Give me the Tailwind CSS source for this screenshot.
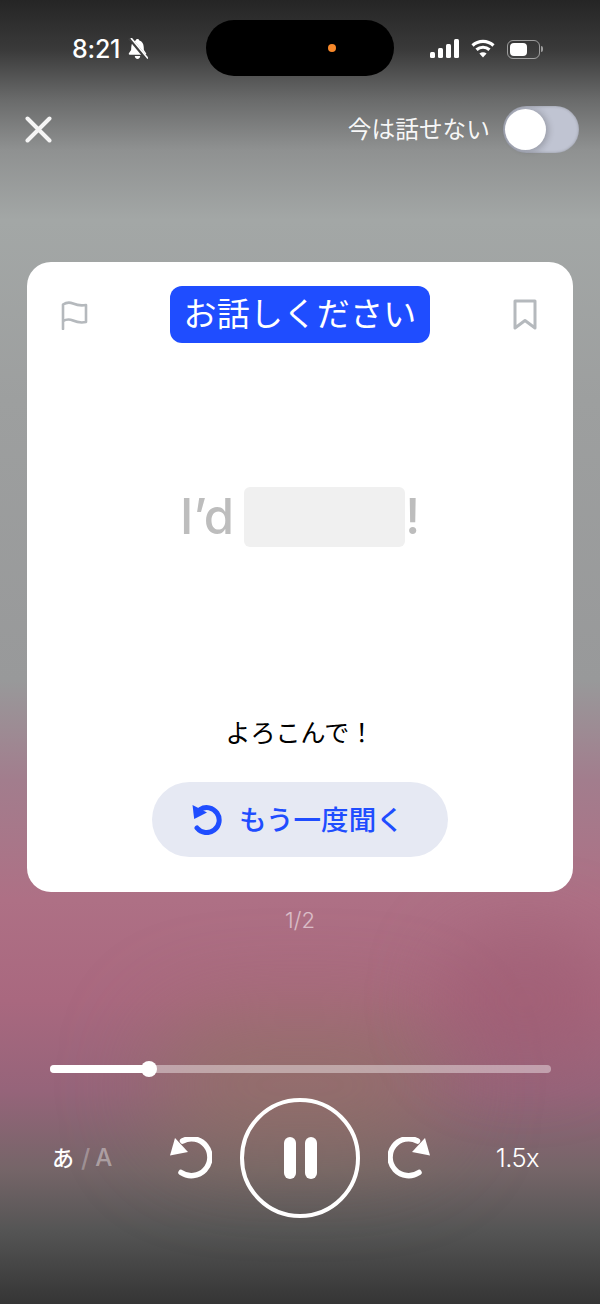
<!DOCTYPE html>
<html lang="ja">
<head>
<meta charset="utf-8">
<script src="https://cdn.jsdelivr.net/npm/@tailwindcss/browser@4"></script>
</head>
<body>
<div class="relative w-[600px] h-[1304px] overflow-hidden flex flex-col font-['Inter','Noto_Sans_CJK_JP',sans-serif] bg-[linear-gradient(180deg,#252525_0px,#3a3a3a_50px,#6a6b6b_100px,#8f9191_150px,#a3a7a6_220px,#9d9f9f_400px,#98999a_680px,#a27d8d_780px,#ae7085_900px,#a9687f_1000px,#96647a_1090px,#756568_1170px,#555555_1230px,#353535_1304px)]">
  <div class="absolute left-[150px] top-[1010px] w-[300px] h-[150px] rounded-full bg-[#8f7a5c]/45 blur-[45px]"></div>
  <div class="absolute left-[440px] top-[930px] w-[170px] h-[140px] rounded-full bg-[#9c5a70]/50 blur-[35px]"></div>

  <!-- status bar -->
  <div class="relative h-[95px] shrink-0 flex items-start">
    <div class="absolute left-[206px] top-[20px] w-[188px] h-[56px] rounded-full bg-black">
      <div class="absolute left-[122px] top-[24px] w-[8px] h-[8px] rounded-full bg-[#f7882a]"></div>
    </div>
    <div class="mt-[35px] ml-[72px] flex items-center gap-[7px] text-white">
      <span class="text-[25px] leading-[28px] font-medium tracking-[-0.2px]">8:21</span>
      <svg width="21" height="22" viewBox="0 0 21 22" fill="#fff"><path d="M10.500 1c1 0 1.700.6 1.800 1.500 2.700.8 4.200 3 4.400 6.300l.2 3.100 2.200 3.400c.4.700 0 1.400-.8 1.400H2.700c-.8 0-1.200-.7-.8-1.400l2.200-3.400.2-3.100C4.500 5.500 6 3.300 8.700 2.500 8.800 1.600 9.500 1 10.500 1z"/><path d="M7.800 18h5.400c0 1.700-1.200 2.900-2.700 2.900S7.800 19.700 7.800 18z"/><path d="M2.500 0l17 20.500" stroke="#3f3f3f" stroke-width="3.600"/><path d="M4 0l17 20.500" stroke="#fff" stroke-width="1.700"/></svg>
    </div>
    <div class="absolute left-[430px] top-[39px] flex items-end gap-[3px]">
      <span class="w-[5px] h-[6px] rounded-[1.500px] bg-white"></span>
      <span class="w-[5px] h-[10px] rounded-[1.500px] bg-white"></span>
      <span class="w-[5px] h-[14px] rounded-[1.500px] bg-white"></span>
      <span class="w-[5px] h-[19px] rounded-[1.500px] bg-white"></span>
    </div>
    <svg class="absolute left-[471px] top-[39px]" width="24" height="19" viewBox="0 0 24 19" fill="none" stroke="#fff" stroke-width="3.200"><path d="M1.500 6.500C7.500 1 16.500 1 22.500 6.500"/><path d="M5.500 10.800c3.800-3.400 9.200-3.400 13 0"/><path d="M12 18.500l-3.600-4c2.200-1.700 5-1.700 7.200 0z" fill="#fff" stroke="none"/></svg>
    <div class="absolute left-[507px] top-[40px] w-[33px] h-[19px] rounded-[6px] border border-white/50 p-[2px]">
      <div class="w-[17px] h-full rounded-[4px] bg-white"></div>
    </div>
    <div class="absolute left-[541px] top-[46px] w-[2px] h-[6px] rounded-r-full bg-white/50"></div>
  </div>

  <!-- top controls -->
  <div class="relative shrink-0 h-[167px] flex items-start justify-between pl-[25px] pr-[21px] pt-[11px]">
    <svg class="mt-[10px]" width="27" height="27" viewBox="0 0 27 27" fill="none" stroke="#f5f5f5" stroke-width="4" stroke-linecap="round"><path d="M2.500 2.500l22 22M24.500 2.500l-22 22"/></svg>
    <div class="flex items-center gap-[13px]">
      <span class="text-[23.700px] leading-[47px] text-white/95">今は話せない</span>
      <div class="w-[76px] h-[47px] rounded-full bg-[linear-gradient(90deg,#a9adbb,#c0c4d2_60%)] pl-[2px] pt-[3px] shadow-[inset_0_0_3px_rgba(0,0,0,0.25)]">
        <div class="w-[41px] h-[41px] rounded-full bg-white shadow-[3px_1px_6px_rgba(0,0,0,0.18)]"></div>
      </div>
    </div>
  </div>

  <!-- card -->
  <div class="relative shrink-0 mx-[27px] h-[630px] rounded-[24px] bg-white flex flex-col items-center pt-[24px]">
    <div class="w-full flex items-center justify-between pl-[34px] pr-[36px]">
      <svg width="27" height="30" viewBox="0 0 27 30" fill="none" stroke="#b5b9bd" stroke-width="2.600" stroke-linejoin="round" stroke-linecap="round"><path d="M2 29V4.500C5 2.500 8.500 2 12 3.500s8 2.500 13 1.500v17c-5 1-9 .3-13-1.500-3.500-1.500-7-1.200-10 .5"/></svg>
      <div class="h-[57px] w-[260px] -ml-[1px] rounded-[12px] bg-[#1f4dff] text-white text-[33px] leading-[57px] text-center font-normal tracking-[0.3px]">お話しください</div>
      <svg width="24" height="31" viewBox="0 0 24 31" fill="none" stroke="#b5b9bd" stroke-width="3" stroke-linejoin="round"><path d="M2 2h20v27l-10-7.500L2 29z"/></svg>
    </div>
    <div class="mt-[144px] h-[60px] flex items-center text-[49px] font-medium text-[#bdbdbd] leading-[60px]">
      <span>I’d</span>
      <span class="ml-[10px] w-[161px] h-[60px] rounded-[6px] bg-[#f0f0f0]"></span>
      <span>!</span>
    </div>
    <p class="mt-[169px] text-[25px] leading-[34px] text-black">よろこんで！</p>
    <div class="mt-[32px] w-[296px] h-[75px] rounded-full bg-[#e6e9f3] flex items-center justify-center gap-[16px] pr-[5px] text-[#1f4dff]">
      <svg width="32" height="30" viewBox="0 0 32 30" fill="none" stroke="#1f4dff" stroke-width="5" stroke-linecap="round"><path d="M9 4.500A12.500 12.500 0 1 1 6 23"/><path d="M1.500 0l1.700 14L16 7.500z" fill="#1f4dff" stroke="none"/></svg>
      <span class="mt-[1px] text-[27.500px] leading-[34px] font-medium tracking-[0.1px]">もう一度聞く</span>
    </div>
  </div>

  <p class="relative mt-[13px] h-[30px] text-center text-[22px] leading-[30px] font-light text-white/55">1/2</p>

  <!-- slider -->
  <div class="relative mt-[130px] ml-[50px] mr-[49px] h-[8px] rounded-full bg-white/40">
    <div class="w-[99px] h-full rounded-full bg-white"></div>
    <div class="absolute left-[91px] top-[-4px] w-[16px] h-[16px] rounded-full bg-white"></div>
  </div>

  <!-- controls -->
  <div class="relative mt-[25px] ml-[53px] mr-[53px] h-[120px] flex items-center text-white">
    <div class="w-[117px] -ml-[1px] mr-[1px] flex items-center text-[22px] font-medium leading-[30px]">
      <span>あ</span><span class="ml-[7px] text-[25px] text-white/30">/</span><span class="ml-[5px] text-[24px] text-white/40">A</span>
    </div>
    <svg width="42" height="42" viewBox="0 0 42 42" fill="none" stroke="#fff" stroke-width="5.500" stroke-linecap="round"><path d="M12.500 4A18.500 18.500 0 1 1 11 35.500"/><path d="M0 18.500L5 1 18 15z" fill="#fff" stroke="none"/></svg>
    <div class="ml-[28px] w-[120px] h-[120px] rounded-full border-[4px] border-white flex items-center justify-center gap-[9px]">
      <span class="w-[12px] h-[42px] rounded-full bg-white"></span>
      <span class="w-[12px] h-[42px] rounded-full bg-white"></span>
    </div>
    <svg class="ml-[28px] -scale-x-100" width="42" height="42" viewBox="0 0 42 42" fill="none" stroke="#fff" stroke-width="5.500" stroke-linecap="round"><path d="M12.500 4A18.500 18.500 0 1 1 11 35.500"/><path d="M0 18.500L5 1 18 15z" fill="#fff" stroke="none"/></svg>
    <span class="ml-auto mr-[8px] text-[25.500px] leading-[30px] font-light tracking-[-0.6px]">1.5x</span>
  </div>
</div>
</body>
</html>
